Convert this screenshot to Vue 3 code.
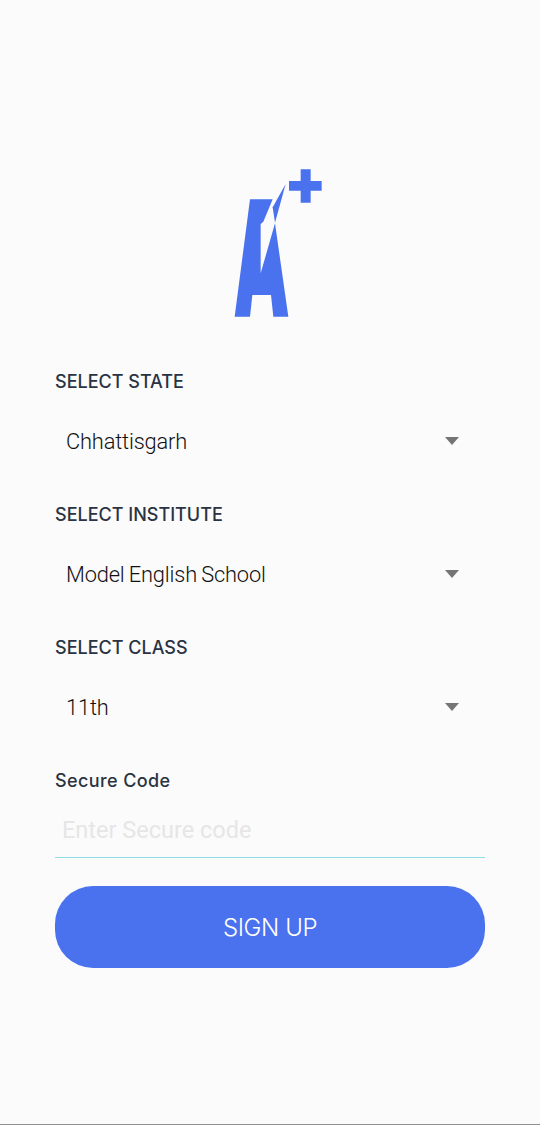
<script setup>
const selects = [
  { label: 'SELECT STATE', value: 'Chhattisgarh' },
  { label: 'SELECT INSTITUTE', value: 'Model English School' },
  { label: 'SELECT CLASS', value: '11th' },
]
</script>

<template>
  <div class="page">
    <svg class="logo" width="110" height="165" viewBox="0 0 330 495">
      <path fill="#4a72ee" d="M90 118H158L130 185 122 192V340L165 190 205 470H160L153 405H97L90 470H44Z" />
      <path fill="#4a72ee" d="M197 72L158 142 165 188Z" />
      <path fill="#4a72ee" d="M242 28H272V63H305V92H272V128H242V92H207V63H242Z" />
    </svg>

    <form class="form" @submit.prevent>
      <div v-for="item in selects" :key="item.label" class="field">
        <div class="label">{{ item.label }}</div>
        <div class="select">
          <span class="value">{{ item.value }}</span>
          <span class="arrow"></span>
        </div>
      </div>

      <div class="label secure">Secure Code</div>
      <input class="code" type="text" placeholder="Enter Secure code" />
      <button class="submit" type="button">SIGN UP</button>
    </form>
  </div>
</template>

<style>
html, body {
  margin: 0;
  background: #fbfbfb;
}
</style>

<style scoped>
.page {
  box-sizing: border-box;
  height: 1125px;
  padding-top: 160px;
  background: #fbfbfb;
  border-bottom: 1px solid #8f8f8f;
  overflow: hidden;
}

.logo {
  display: block;
  margin-left: 220px;
}

.form {
  display: flex;
  flex-direction: column;
  margin-top: 45px;
  padding: 0 55px;
}

.field {
  height: 133px;
}

.label {
  height: 24px;
  line-height: 24px;
  font-family: Inter, sans-serif;
  font-size: 18px;
  font-weight: 450;
  color: #2a3342;
}

.secure {
  letter-spacing: 0.4px;
}

.select {
  display: flex;
  align-items: center;
  justify-content: space-between;
  height: 72px;
  margin-top: 11px;
  padding: 0 26px 0 11px;
}

.value {
  font-family: Roboto, sans-serif;
  font-size: 21.8px;
  font-weight: 300;
  letter-spacing: -0.15px;
  word-spacing: -1px;
  color: #111111;
}

.arrow {
  width: 0;
  height: 0;
  border-left: 7px solid transparent;
  border-right: 7px solid transparent;
  border-top: 8px solid #757575;
}

.code {
  box-sizing: border-box;
  width: 100%;
  height: 54px;
  margin-top: 11px;
  padding: 0 7px 2px;
  border: 0;
  border-bottom: 1px solid #8fdde6;
  outline: none;
  background: transparent;
  font-family: Roboto, sans-serif;
  font-size: 23.5px;
}

.code::placeholder {
  color: #e6e6e6;
  opacity: 1;
}

.submit {
  height: 82px;
  margin-top: 28px;
  border: 0;
  border-radius: 38px;
  background: #4a72ee;
  color: #ffffff;
  font-family: Inter, sans-serif;
  font-size: 24px;
  font-weight: 300;
  letter-spacing: -0.4px;
}
</style>
